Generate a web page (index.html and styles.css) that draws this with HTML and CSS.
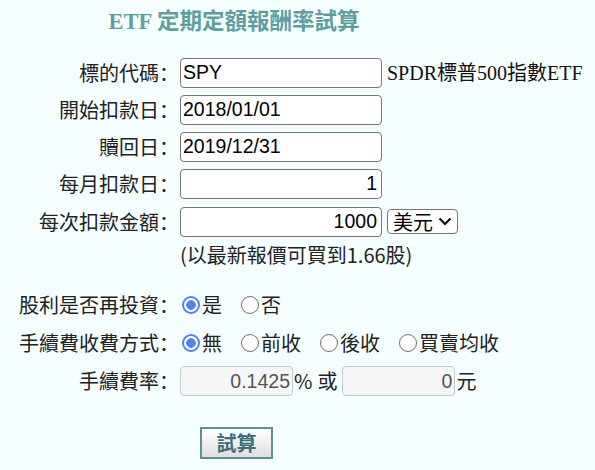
FILE: index.html
```html
<!DOCTYPE html>
<html>
<head>
<meta charset="utf-8">
<title>ETF 定期定額報酬率試算</title>
<link rel="stylesheet" href="styles.css">
</head>
<body>
<div class="page">
  <h1 class="title">ETF 定期定額報酬率試算</h1>
  <form class="form">
    <div class="row r-std">
      <span class="lbl">標的代碼：</span>
      <div class="cell"><input class="txt" type="text" value="SPY"><span class="desc">SPDR標普500指數ETF</span></div>
    </div>
    <div class="row r-std">
      <span class="lbl">開始扣款日：</span>
      <div class="cell"><input class="txt" type="text" value="2018/01/01"></div>
    </div>
    <div class="row r-std">
      <span class="lbl">贖回日：</span>
      <div class="cell"><input class="txt" type="text" value="2019/12/31"></div>
    </div>
    <div class="row r-std">
      <span class="lbl">每月扣款日：</span>
      <div class="cell"><input class="txt num" type="text" value="1"></div>
    </div>
    <div class="row r-amt">
      <span class="lbl">每次扣款金額：</span>
      <div class="cell"><input class="txt num" type="text" value="1000"><span class="sel-wrap"><select class="cur"><option>美元</option><option>台幣</option></select><svg class="chev" width="14" height="9" viewBox="0 0 14 9"><path d="M1.5 1.5 L7 7 L12.5 1.5" fill="none" stroke="#111" stroke-width="2.2"/></svg></span></div>
    </div>
    <div class="row r-note">
      <span class="lbl"></span>
      <div class="cell"><span class="note">(以最新報價可買到1.66股)</span></div>
    </div>
    <div class="row r-radio r-first">
      <span class="lbl">股利是否再投資：</span>
      <div class="cell">
        <label class="opt"><input type="radio" name="div" checked><span>是</span></label>
        <label class="opt"><input type="radio" name="div"><span>否</span></label>
      </div>
    </div>
    <div class="row r-radio">
      <span class="lbl">手續費收費方式：</span>
      <div class="cell">
        <label class="opt"><input type="radio" name="fee" checked><span>無</span></label>
        <label class="opt"><input type="radio" name="fee"><span>前收</span></label>
        <label class="opt"><input type="radio" name="fee"><span>後收</span></label>
        <label class="opt"><input type="radio" name="fee"><span>買賣均收</span></label>
      </div>
    </div>
    <div class="row r-radio">
      <span class="lbl">手續費率：</span>
      <div class="cell"><input class="fee" type="text" value="0.1425" disabled><span class="unit">%</span><span class="or">或</span><input class="fee" type="text" value="0" disabled><span class="unit">元</span></div>
    </div>
    <div class="actions">
      <button type="button" class="btn">試算</button>
    </div>
  </form>
</div>
</body>
</html>
```
FILE: styles.css
```css
html, body {
  margin: 0;
  padding: 0;
  background: #f5ffff;
}
body {
  font-family: "Noto Sans CJK SC", "Noto Sans CJK TC", sans-serif;
  font-size: 20px;
  color: #222;
}
.page {
  width: 595px;
}
.title {
  width: 468px;
  margin: 0;
  padding-top: 8px;
  height: 46px;
  box-sizing: border-box;
  text-align: center;
  font-family: "Liberation Serif", "Noto Sans CJK SC", serif;
  font-weight: bold;
  font-size: 22.5px;
  line-height: 27px;
  color: #5f9ea0;
}
.form {
  margin: 0;
  padding-top: 8px;
}
.row {
  display: grid;
  grid-template-columns: 180px auto;
  column-gap: 0;
  align-items: center;
}
.r-std { height: 37px; }
.r-amt { height: 39px; }
.r-note { height: 28px; }
.r-radio { height: 38px; }
.r-first { margin-top: 17px; }
.lbl {
  text-align: right;
  white-space: nowrap;
  line-height: 26px;
  padding-right: 1px;
}
.cell {
  display: flex;
  align-items: center;
  white-space: nowrap;
  line-height: 26px;
}
.txt {
  box-sizing: border-box;
  width: 202px;
  height: 30px;
  margin: 0;
  padding: 0 4px 0 2px;
  border: 1px solid #767676;
  border-radius: 4px;
  background: #fff;
  font-family: "Liberation Sans", Arial, sans-serif;
  font-size: 19.5px;
  color: #000;
}
.num { text-align: right; }
.desc {
  margin-left: 5px;
  font-family: "Liberation Serif", "Noto Sans CJK SC", serif;
  font-size: 20px;
  color: #111;
}
.sel-wrap {
  position: relative;
  display: inline-flex;
  margin-left: 5px;
}
.cur {
  appearance: none;
  -webkit-appearance: none;
  box-sizing: border-box;
  width: 71px;
  height: 25px;
  margin: 0;
  padding: 0 20px 0 5px;
  border: 1px solid #767676;
  border-radius: 4px;
  background: #fff;
  font-family: "Noto Sans CJK SC", sans-serif;
  font-size: 20px;
  line-height: 23px;
  color: #000;
}
.chev {
  position: absolute;
  right: 6px;
  top: 8px;
  pointer-events: none;
}
.note {
  color: #222;
}
.opt {
  display: flex;
  align-items: center;
  margin-right: 17px;
}
.opt input {
  appearance: none;
  -webkit-appearance: none;
  flex: none;
  box-sizing: border-box;
  width: 18px;
  height: 18px;
  min-width: 18px;
  margin: 0 2px 0 2px;
  border: 1.8px solid #707070;
  border-radius: 50%;
  background: #fff;
}
.opt input:checked {
  border: 2px solid #4c84f4;
  background: radial-gradient(circle, #4c84f4 0 4.5px, #fff 5px);
}
.fee {
  box-sizing: border-box;
  width: 113px;
  height: 30px;
  margin: 0;
  padding: 0 2px;
  border: 1px solid #c6c9c9;
  border-radius: 4px;
  background: #f5f6f7;
  font-family: "Liberation Sans", Arial, sans-serif;
  font-size: 19.5px;
  color: #555;
  text-align: right;
}
.fee + .unit { margin-left: 1px; }
.or { margin: 0 5px 0 5px; }
.actions {
  margin-top: 27px;
  padding-left: 200px;
}
.btn {
  box-sizing: border-box;
  width: 73px;
  height: 32px;
  margin: 0;
  padding: 0;
  border: 2px solid #5b9294;
  background: linear-gradient(#ffffff, #dedede);
  font-family: "Noto Sans CJK SC", sans-serif;
  font-weight: bold;
  font-size: 20px;
  line-height: 26px;
  color: #3f6e7c;
}
```
